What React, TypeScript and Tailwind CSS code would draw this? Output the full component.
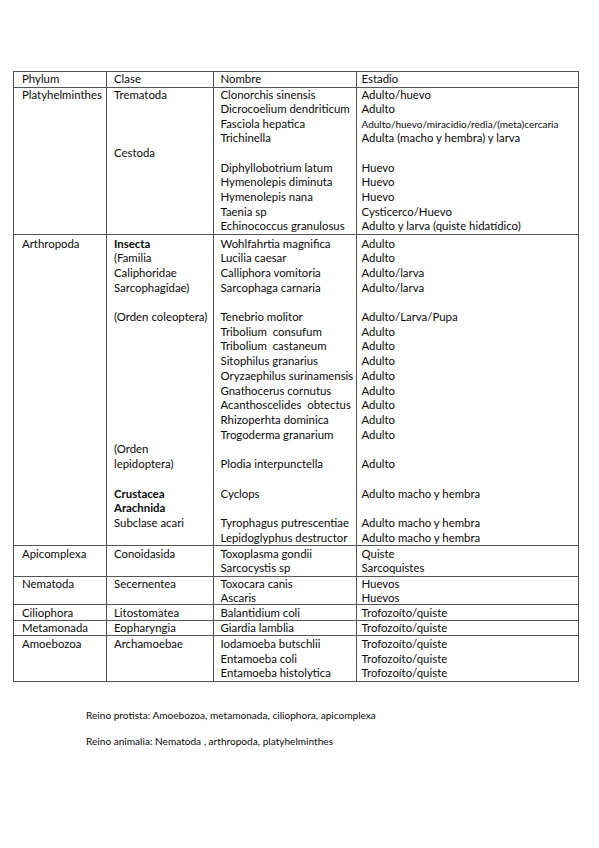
type Cell = string | { t: string; b?: boolean; sm?: boolean }

type Row = {
  cols: [Cell[], Cell[], Cell[], Cell[]]
  lead: string
  pad: string
}

const rows: Row[] = [
  {
    lead: 'leading-[14.65px]',
    pad: 'pt-[0px] pb-[0px]',
    cols: [
      ['Platyhelminthes'],
      ['Trematoda', '', '', '', 'Cestoda'],
      [
        'Clonorchis sinensis',
        'Dicrocoelium dendriticum',
        'Fasciola hepatica',
        'Trichinella',
        '',
        'Diphyllobotrium latum',
        'Hymenolepis diminuta',
        'Hymenolepis nana',
        'Taenia sp',
        'Echinococcus granulosus',
      ],
      [
        'Adulto/huevo',
        'Adulto',
        { t: 'Adulto/huevo/miracidio/redia/(meta)cercaria', sm: true },
        'Adulta (macho y hembra) y larva',
        '',
        'Huevo',
        'Huevo',
        'Huevo',
        'Cysticerco/Huevo',
        'Adulto y larva (quiste hidatídico)',
      ],
    ],
  },
  {
    lead: 'leading-[14.7px]',
    pad: 'pt-[1.5px] pb-[0px]',
    cols: [
      ['Arthropoda'],
      [
        { t: 'Insecta', b: true },
        '(Familia',
        'Caliphoridae',
        'Sarcophagidae)',
        '',
        '(Orden coleoptera)',
        '', '', '', '', '', '', '', '',
        '(Orden',
        'lepidoptera)',
        '',
        { t: 'Crustacea', b: true },
        { t: 'Arachnida', b: true },
        'Subclase acari',
      ],
      [
        'Wohlfahrtia magnifica',
        'Lucilia caesar',
        'Calliphora vomitoria',
        'Sarcophaga carnaria',
        '',
        'Tenebrio molitor',
        'Tribolium  consufum',
        'Tribolium  castaneum',
        'Sitophilus granarius',
        'Oryzaephilus surinamensis',
        'Gnathocerus cornutus',
        'Acanthoscelides  obtectus',
        'Rhizoperhta dominica',
        'Trogoderma granarium',
        '',
        'Plodia interpunctella',
        '',
        'Cyclops',
        '',
        'Tyrophagus putrescentiae',
        'Lepidoglyphus destructor',
      ],
      [
        'Adulto',
        'Adulto',
        'Adulto/larva',
        'Adulto/larva',
        '',
        'Adulto/Larva/Pupa',
        'Adulto', 'Adulto', 'Adulto', 'Adulto', 'Adulto', 'Adulto', 'Adulto', 'Adulto',
        '',
        'Adulto',
        '',
        'Adulto macho y hembra',
        '',
        'Adulto macho y hembra',
        'Adulto macho y hembra',
      ],
    ],
  },
  {
    lead: 'leading-[14px]',
    pad: 'pt-[1px] pb-[0.5px]',
    cols: [['Apicomplexa'], ['Conoidasida'], ['Toxoplasma gondii', 'Sarcocystis sp'], ['Quiste', 'Sarcoquistes']],
  },
  {
    lead: 'leading-[13.8px]',
    pad: 'pt-[0px] pb-[0px]',
    cols: [['Nematoda'], ['Secernentea'], ['Toxocara canis', 'Ascaris'], ['Huevos', 'Huevos']],
  },
  {
    lead: 'leading-[14px]',
    pad: 'pt-[0.5px] pb-[0px]',
    cols: [['Ciliophora'], ['Litostomatea'], ['Balantidium coli'], ['Trofozoíto/quiste']],
  },
  {
    lead: 'leading-[14px]',
    pad: 'pt-[0.5px] pb-[0px]',
    cols: [['Metamonada'], ['Eopharyngia'], ['Giardia lamblia'], ['Trofozoíto/quiste']],
  },
  {
    lead: 'leading-[14.2px]',
    pad: 'pt-[1px] pb-[1px]',
    cols: [
      ['Amoebozoa'],
      ['Archamoebae'],
      ['Iodamoeba butschlii', 'Entamoeba coli', 'Entamoeba histolytica'],
      ['Trofozoíto/quiste', 'Trofozoíto/quiste', 'Trofozoíto/quiste'],
    ],
  },
]

const colPad = ['pl-[8px]', 'pl-[7px]', 'pl-[6.5px]', 'pl-[4.5px]']
const colW = ['w-[93px]', 'w-[107px]', 'w-[143px]', 'w-[222px]']

function Line({ c }: { c: Cell }) {
  if (typeof c === 'string') {
    return <div className="whitespace-pre">{c === '' ? '\u00a0' : c}</div>
  }
  if (c.sm) {
    return <div className="whitespace-pre text-[10px]">{c.t}</div>
  }
  return <div className={`whitespace-pre ${c.b ? 'font-bold' : ''}`}>{c.t}</div>
}

export default function App() {
  return (
    <div className="h-[848px] w-[599px] bg-white pl-[13px] pt-[70.5px] font-['Lato','Liberation_Sans',sans-serif] text-[11.4px] text-[#0a0a0a]">
      <table className="border-collapse">
        <thead>
          <tr>
            {['Phylum', 'Clase', 'Nombre', 'Estadio'].map((h, i) => (
              <th
                key={h}
                className={`h-[16px] border border-[#555] p-0 text-left align-middle font-normal leading-[14px] ${colPad[i]} ${colW[i]}`}
              >
                {h}
              </th>
            ))}
          </tr>
        </thead>
        <tbody>
          {rows.map((r, ri) => (
            <tr key={ri}>
              {r.cols.map((lines, ci) => (
                <td
                  key={ci}
                  className={`border border-[#555] p-0 align-top ${r.lead} ${r.pad} ${colPad[ci]}`}
                >
                  {lines.map((c, li) => (
                    <Line key={li} c={c} />
                  ))}
                </td>
              ))}
            </tr>
          ))}
        </tbody>
      </table>

      <div className="ml-[73px] mt-[27px] text-[10.1px] leading-[13px]">
        <p>Reino protista: Amoebozoa, metamonada, ciliophora, apicomplexa</p>
        <p className="mt-[13px]">Reino animalia: Nematoda , arthropoda, platyhelminthes</p>
      </div>
    </div>
  )
}
